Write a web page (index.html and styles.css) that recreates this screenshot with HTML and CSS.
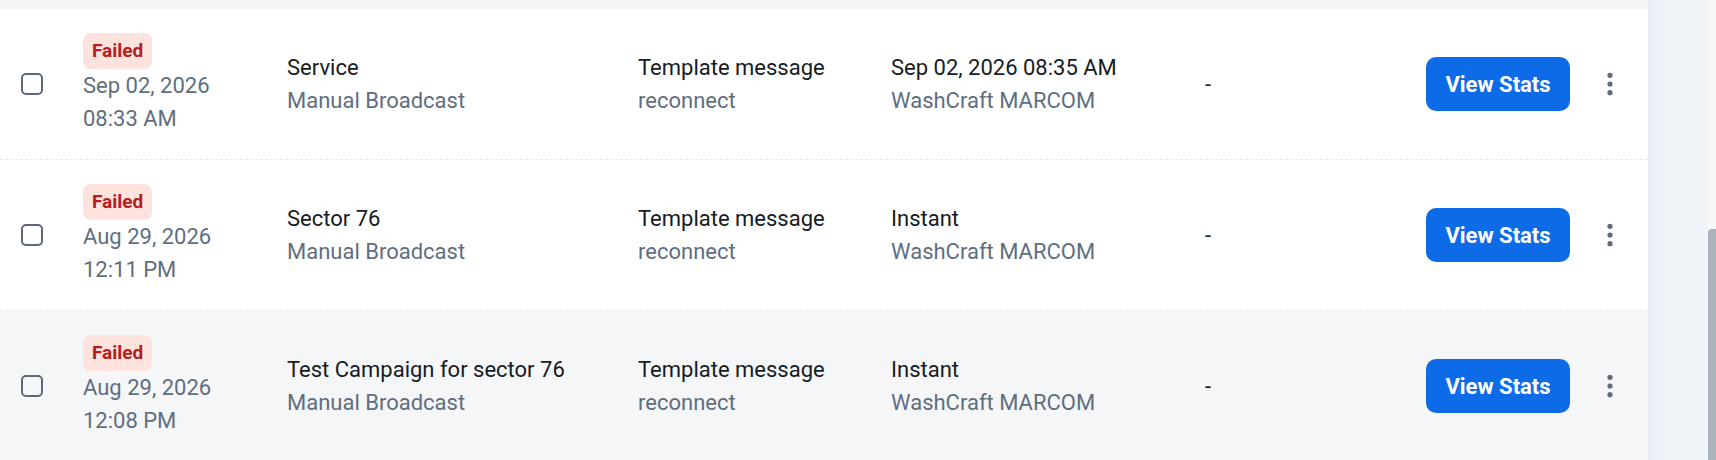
FILE: index.html
```html
<!DOCTYPE html>
<html lang="en">
<head>
<meta charset="utf-8">
<title>Broadcasts</title>
<link rel="stylesheet" href="styles.css">
</head>
<body>
<div class="page">
  <div class="main">
    <div class="topband"></div>

    <div class="row">
      <div class="cell"><span class="checkbox"></span></div>
      <div class="cell stack">
        <span class="badge">Failed</span>
        <span class="sub">Sep 02, 2026</span>
        <span class="sub">08:33 AM</span>
      </div>
      <div class="cell stack">
        <span class="pri">Service</span>
        <span class="sub">Manual Broadcast</span>
      </div>
      <div class="cell stack">
        <span class="pri">Template message</span>
        <span class="sub">reconnect</span>
      </div>
      <div class="cell stack">
        <span class="pri">Sep 02, 2026 08:35 AM</span>
        <span class="sub">WashCraft MARCOM</span>
      </div>
      <div class="cell"><span class="pri">-</span></div>
      <div class="cell"><button class="btn">View Stats</button></div>
      <div class="cell kebab"><svg width="6" height="24" viewBox="0 0 6 24"><circle cx="3" cy="3.3" r="2.6"/><circle cx="3" cy="12" r="2.6"/><circle cx="3" cy="20.7" r="2.6"/></svg></div>
    </div>

    <div class="row">
      <div class="cell"><span class="checkbox"></span></div>
      <div class="cell stack">
        <span class="badge">Failed</span>
        <span class="sub">Aug 29, 2026</span>
        <span class="sub">12:11 PM</span>
      </div>
      <div class="cell stack">
        <span class="pri">Sector 76</span>
        <span class="sub">Manual Broadcast</span>
      </div>
      <div class="cell stack">
        <span class="pri">Template message</span>
        <span class="sub">reconnect</span>
      </div>
      <div class="cell stack">
        <span class="pri">Instant</span>
        <span class="sub">WashCraft MARCOM</span>
      </div>
      <div class="cell"><span class="pri">-</span></div>
      <div class="cell"><button class="btn">View Stats</button></div>
      <div class="cell kebab"><svg width="6" height="24" viewBox="0 0 6 24"><circle cx="3" cy="3.3" r="2.6"/><circle cx="3" cy="12" r="2.6"/><circle cx="3" cy="20.7" r="2.6"/></svg></div>
    </div>

    <div class="row hover">
      <div class="cell"><span class="checkbox"></span></div>
      <div class="cell stack">
        <span class="badge">Failed</span>
        <span class="sub">Aug 29, 2026</span>
        <span class="sub">12:08 PM</span>
      </div>
      <div class="cell stack">
        <span class="pri">Test Campaign for sector 76</span>
        <span class="sub">Manual Broadcast</span>
      </div>
      <div class="cell stack">
        <span class="pri">Template message</span>
        <span class="sub">reconnect</span>
      </div>
      <div class="cell stack">
        <span class="pri">Instant</span>
        <span class="sub">WashCraft MARCOM</span>
      </div>
      <div class="cell"><span class="pri">-</span></div>
      <div class="cell"><button class="btn">View Stats</button></div>
      <div class="cell kebab"><svg width="6" height="24" viewBox="0 0 6 24"><circle cx="3" cy="3.3" r="2.6"/><circle cx="3" cy="12" r="2.6"/><circle cx="3" cy="20.7" r="2.6"/></svg></div>
    </div>
  </div>
  <div class="side"></div>
  <div class="scrollbar">
    <div class="track-gap"></div>
    <div class="thumb"></div>
  </div>
</div>
</body>
</html>
```

FILE: styles.css
```css
* { box-sizing: border-box; }
html, body { margin: 0; padding: 0; }
body {
  font-family: Roboto, "Liberation Sans", Arial, sans-serif;
  background: #ffffff;
  overflow: hidden;
}
.page {
  display: flex;
  width: 1716px;
  height: 460px;
  overflow: hidden;
}
.main {
  width: 1648px;
  flex: none;
  display: flex;
  flex-direction: column;
}
.topband {
  height: 9px;
  background: #f4f5f7;
  flex: none;
}
.row {
  display: grid;
  grid-template-columns: 62px 204px 351px 253px 314px 221px 172px 23px;
  padding: 24px 0 24px 21px;
  border-bottom: 1px dashed #e4e7eb;
  align-items: center;
  background: #ffffff;
  flex: none;
}
.row.hover { background: #f5f6f8; }
.cell { display: flex; align-items: center; }
.stack { flex-direction: column; align-items: flex-start; }
.checkbox {
  width: 22px;
  height: 22px;
  border: 2px solid #5d6979;
  border-radius: 5px;
  display: block;
}
.badge {
  display: inline-block;
  height: 36px;
  line-height: 36px;
  padding: 0 9px;
  border-radius: 8px;
  background: #fde2de;
  color: #b81d1d;
  font-weight: 700;
  font-size: 19px;
}
.pri {
  font-size: 22px;
  line-height: 33px;
  color: #161b24;
  white-space: nowrap;
}
.sub {
  font-size: 22px;
  line-height: 33px;
  color: #5f6e7f;
  white-space: nowrap;
}
.btn {
  width: 144px;
  height: 54px;
  border: none;
  border-radius: 10px;
  background: #0e6be8;
  color: #ffffff;
  font-family: Roboto, "Liberation Sans", Arial, sans-serif;
  font-weight: 700;
  font-size: 22px;
  padding: 0;
  cursor: pointer;
}
.kebab { justify-content: center; }
.kebab svg { fill: #5f6b7a; display: block; }
.side {
  width: 60px;
  flex: none;
  background: linear-gradient(to right, #e7edf3 0px, #eef3f8 14px, #f0f4f8 60px);
}
.scrollbar {
  width: 8px;
  flex: none;
  background: #f7f7f7;
  display: flex;
  flex-direction: column;
}
.track-gap { height: 229px; flex: none; }
.thumb {
  flex: 1;
  background: #abb2b9;
  border-radius: 4px 0 0 0;
}
```
